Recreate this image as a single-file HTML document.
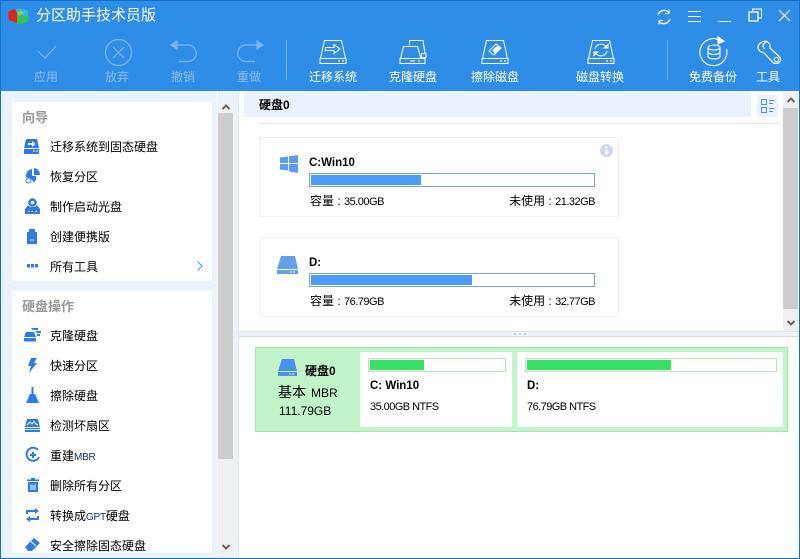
<!DOCTYPE html>
<html><head><meta charset="utf-8"><style>
html,body{margin:0;padding:0}
body{width:800px;height:559px;position:relative;overflow:hidden;background:#fff;font-family:"Liberation Sans","WenQuanYi Zen Hei","Noto Sans CJK SC",sans-serif;font-size:12px;color:#000}
.a,.t{position:absolute}
.t{white-space:nowrap;line-height:16px}
.w{color:#fff}.f{color:#8dbdee}
.c{transform:translateX(-50%)}
.g{color:#999;font-weight:bold;font-size:13px}
.l{font-size:11px;letter-spacing:-.5px}
.m{font-size:10px;letter-spacing:-.25px;color:#1a2f6e}
svg{position:absolute;overflow:visible}
.card{position:absolute;left:259px;width:358px;height:78px;border:1px solid #f0f0f4;background:#fff}
.bar{position:absolute;left:309px;width:284px;height:12px;border:1px solid #7ba4dc;background:#fff}
.bar i{display:block;position:absolute;left:1px;top:1px;height:10px;background:#4d9bfa}
.gb{position:absolute;height:12px;border:1px solid #b2e8bd;background:#fff}
.gb i{display:block;position:absolute;left:1px;top:1px;height:10px;background:#3ae066}
</style></head><body>
<div class="a" style="left:0;top:0;width:800px;height:559px;background:#eaf2fd"></div>
<div class="a" style="left:0;top:0;width:800px;height:91px;background:#2e8de6"></div>
<div class="a" style="left:0;top:0;width:800px;height:1px;background:#1173c4"></div>
<div class="a" style="left:0;top:0;width:1px;height:559px;background:#1173c4"></div>
<div class="a" style="left:0;top:558px;width:800px;height:1px;background:#1173c4"></div>

<svg style="left:8px;top:7px" width="21" height="18" viewBox="0 0 21 18">
<path d="M6 3 Q12 0 20 4 V10 L9 7 Z" fill="#2fb6e8"/>
<path d="M9 8 L20 9 V14 Q16 17 9 17 Z" fill="#34c24a"/>
<path d="M0 5 L7 2 L9 6 V16 L1 13 Z" fill="#e3211f"/>
<path d="M9 5 L14 4 L16 6 L11 9 Z" fill="#9ad13a"/>
</svg>
<div class="t w" style="left:36px;top:7px;font-size:15px;line-height:18px">分区助手技术员版</div>

<!-- window buttons -->
<svg style="left:655px;top:8px" width="18" height="18" fill="none" stroke="#fff" stroke-width="1.3">
<path d="M3 7A6.500 6.500 0 0 1 14 4.500M15 11A6.500 6.500 0 0 1 4 13.500"/><path d="M14 1.500v4h-4M4 16.500v-4h4" stroke-width="1"/></svg>
<svg style="left:687px;top:10px" width="14" height="13" stroke="#fff"><path d="M1 1.500H14M1 6.500H14M1 11.500H14"/></svg>
<svg style="left:717px;top:10px" width="14" height="13" stroke="#fff"><path d="M1 11.500H14"/></svg>
<svg style="left:748px;top:8px" width="14" height="14" fill="none" stroke="#fff"><path d="M4.500 4V1H13.500V10H10.500"/><rect x="1" y="4" width="9" height="9" stroke-width="1.300"/></svg>
<svg style="left:778px;top:9px" width="13" height="13" stroke="#fff" stroke-width="1.100"><path d="M1 1L12 12M12 1L1 12"/></svg>

<!-- toolbar icons -->
<svg style="left:36px;top:44px" width="22" height="16" fill="none" stroke="#7db5ec" stroke-width="1.200"><path d="M2 7L9 14L20 2"/></svg>
<svg style="left:104px;top:38px" width="28" height="28" fill="none" stroke="#7db5ec" stroke-width="1.200"><circle cx="14.500" cy="14.500" r="13"/><path d="M9 9L20 20M20 9L9 20"/></svg>
<svg style="left:170px;top:40px" width="28" height="24" fill="none" stroke="#7db5ec" stroke-width="1.200"><path d="M6 5H18A7.500 7.500 0 0 1 18 21.500H9"/><path d="M1 5L7 1V9Z" fill="#7db5ec"/></svg>
<svg style="left:236px;top:40px" width="28" height="24" fill="none" stroke="#7db5ec" stroke-width="1.200"><path d="M22 5H10A7.500 7.500 0 0 0 10 21.500H19"/><path d="M27 5L21 1V9Z" fill="#7db5ec"/></svg>
<div class="a" style="left:286px;top:40px;width:1px;height:40px;background:#6daeec"></div>
<div class="a" style="left:667px;top:40px;width:1px;height:40px;background:#6daeec"></div>

<svg style="left:319px;top:39px" width="30" height="26" fill="none" stroke="#fff"><path d="M5.500 1.500H22.500L26.500 19.500H1.500Z"/><rect x="1" y="19.500" width="26" height="5"/><path d="M6.500 8.500H15V5.500L21 10L15 14.500V11.500H6.500Z"/><path d="M19 22H21M23 22H25"/></svg>
<svg style="left:399px;top:39px" width="32" height="26" fill="none" stroke="#fff"><path d="M10.500 6.500V1.500H24L26 14.500"/><path d="M4.500 7.500H18.500L22 19.500H1.500Z" fill="#2e8de6"/><rect x="1" y="19.500" width="25" height="5"/><rect x="22.500" y="14.500" width="4.500" height="4"/><path d="M11 22H16M19 22H21"/></svg>
<svg style="left:481px;top:39px" width="30" height="26" fill="none" stroke="#fff"><path d="M5.500 1.500H22.500L26.500 19.500H1.500Z"/><rect x="1" y="19.500" width="26" height="5"/><path d="M8 12L15 5L20 9L13 16Z"/><path d="M12 11L17 7L19 9L14 14Z" fill="#fff"/><path d="M19 22H21M23 22H25"/></svg>
<svg style="left:587px;top:39px" width="30" height="26" fill="none" stroke="#fff"><path d="M5.500 1.500H22.500L26.500 19.500H1.500Z"/><rect x="1" y="19.500" width="26" height="5"/><path d="M8 10A6 6 0 0 1 19 8M20 12A6 6 0 0 1 9 14"/><path d="M17 9H21V5.500ZM11 13H7V16.500Z" fill="#fff"/><path d="M19 22H21M23 22H25"/></svg>
<svg style="left:699px;top:36px" width="30" height="30" fill="none" stroke="#fff" stroke-width="1.100"><path d="M22 5A13.500 13.500 0 1 0 27.500 13"/><path d="M19 1L25 5L19 8Z" fill="#fff"/><ellipse cx="15" cy="11.500" rx="6" ry="2.500"/><path d="M9 11.500V20.500C9 22 12 23 15 23S21 22 21 20.500V11.500M9 16C9 17.500 12 18.500 15 18.500S21 17.500 21 16"/></svg>
<svg style="left:757px;top:40px" width="26" height="26" fill="none" stroke="#fff" stroke-width="1.200"><path d="M10 1.500C6 0.500 1.500 3 1 7C1 10 3.500 12.500 6.500 12.500L15 21.500C17 24.500 23 24 23.500 20C23.800 18 23 16.800 21 15.500L13 8C13.500 5 12.500 3 10 1.500ZM9 1.800L5.500 5.500L7.500 9"/><circle cx="19.500" cy="19.500" r="2.200"/></svg>

<div class="t f c" style="left:46px;top:69px">应用</div>
<div class="t f c" style="left:117px;top:69px">放弃</div>
<div class="t f c" style="left:183px;top:69px">撤销</div>
<div class="t f c" style="left:249px;top:69px">重做</div>
<div class="t w c" style="left:333px;top:69px">迁移系统</div>
<div class="t w c" style="left:413px;top:69px">克隆硬盘</div>
<div class="t w c" style="left:495px;top:69px">擦除磁盘</div>
<div class="t w c" style="left:600px;top:69px">磁盘转换</div>
<div class="t w c" style="left:713px;top:69px">免费备份</div>
<div class="t w c" style="left:768px;top:69px">工具</div>

<!-- left panel -->
<div class="a" style="left:12px;top:102px;width:200px;height:179px;background:#fff"></div>
<div class="a" style="left:12px;top:291px;width:200px;height:262px;background:#fff"></div>
<div class="a" style="left:217px;top:91px;width:1px;height:467px;background:#fff"></div>
<div class="a" style="left:218px;top:102px;width:15px;height:451px;background:#f0f0f0"></div>
<div class="a" style="left:218px;top:113px;width:15px;height:346px;background:#cdcdcd"></div>
<svg style="left:221px;top:103px" width="10" height="8" fill="none" stroke="#666" stroke-width="2"><path d="M1.500 6L5 2.500L8.500 6"/></svg>
<svg style="left:221px;top:543px" width="10" height="8" fill="none" stroke="#666" stroke-width="2"><path d="M1.500 2L5 5.500L8.500 2"/></svg>

<div class="t g" style="left:22px;top:110px">向导</div>
<div class="t g" style="left:22px;top:299px">硬盘操作</div>

<div class="t" style="left:50px;top:139px">迁移系统到固态硬盘</div>
<div class="t" style="left:50px;top:169px">恢复分区</div>
<div class="t" style="left:50px;top:199px">制作启动光盘</div>
<div class="t" style="left:50px;top:229px">创建便携版</div>
<div class="t" style="left:50px;top:259px">所有工具</div>
<svg style="left:196px;top:260px" width="8" height="12" fill="none" stroke="#4a9cf0" stroke-width="1.100"><path d="M1.500 1.500L6 6L1.500 10.500"/></svg>
<div class="t" style="left:50px;top:328px">克隆硬盘</div>
<div class="t" style="left:50px;top:358px">快速分区</div>
<div class="t" style="left:50px;top:388px">擦除硬盘</div>
<div class="t" style="left:50px;top:418px">检测坏扇区</div>
<div class="t" style="left:50px;top:448px">重建<span class="m">MBR</span></div>
<div class="t" style="left:50px;top:478px">删除所有分区</div>
<div class="t" style="left:50px;top:508px">转换成<span class="m">GPT</span>硬盘</div>
<div class="t" style="left:50px;top:538px">安全擦除固态硬盘</div>

<svg style="left:24px;top:139px" width="16" height="15" fill="#2f7be6"><path d="M2 0H13L15 9H0Z"/><rect y="10" width="15" height="5"/><path d="M4 4H8V2L11.500 5L8 8V6H4Z" fill="#fff"/><path d="M9 12H11M12 12H14" stroke="#fff"/></svg>
<svg style="left:25px;top:168px" width="16" height="16" fill="#2f7be6"><path d="M9 0A7 7 0 0 1 15 7H9Z"/><path d="M7 1V8L11 8A7 7 0 0 1 9 14.500L6 11L1 9A7 7 0 0 1 7 1Z"/><circle cx="3.500" cy="12.500" r="2.500" fill="none" stroke="#2f7be6"/></svg>
<svg style="left:25px;top:198px" width="15" height="16" fill="#2f7be6"><circle cx="7.500" cy="4.500" r="3" fill="none" stroke="#2f7be6" stroke-width="2.500"/><path d="M3 7L0 11H15L12 7L10 9H5Z"/><rect y="11" width="15" height="5"/><path d="M3 13.500H4.500M6.500 13.500H8M10.500 13.500H12" stroke="#fff"/></svg>
<svg style="left:27px;top:229px" width="10" height="15" fill="#2f7be6"><path d="M2 0H8V3H2Z"/><rect y="3" width="10" height="12"/><path d="M3 11H7" stroke="#fff"/></svg>
<svg style="left:27px;top:264px" width="11" height="4" fill="#2f7be6"><rect width="3" height="3.500"/><rect x="4" width="3" height="3.500"/><rect x="8" width="3" height="3.500"/></svg>

<svg style="left:24px;top:328px" width="17" height="14" fill="#2f7be6"><path d="M7 0H14V2H9ZM11 3H17V5H13ZM2 4H10L12 9H0Z"/><rect y="10" width="12" height="3.500"/><rect x="13" y="6" width="3" height="2"/></svg>
<svg style="left:27px;top:358px" width="11" height="15" fill="#2f7be6"><path d="M4 0H10L7 5H10L2 15L4 8H1Z"/></svg>
<svg style="left:26px;top:387px" width="13" height="16" fill="#2f7be6"><rect x="5.500" y="0" width="2" height="7"/><path d="M4 7H9L13 16H0Z"/></svg>
<svg style="left:25px;top:419px" width="15" height="13" fill="#2f7be6"><path d="M2 0H13L15 8H0Z"/><path d="M2 6L5 3L7 5L9 2.500L11 5L13 6" stroke="#fff" fill="none"/><rect y="9" width="15" height="1.200"/><rect y="11" width="15" height="2"/></svg>
<svg style="left:25px;top:447px" width="15" height="16" fill="none" stroke="#2f7be6" stroke-width="2"><path d="M13 3A6.500 6.500 0 1 0 14 10"/><path d="M5 8H11M8 5V11"/></svg>
<svg style="left:27px;top:478px" width="12" height="14" fill="#2f7be6"><rect y="1.500" width="12" height="1.500"/><rect x="4" width="4" height="1.500"/><path d="M1 4H11V14H1Z"/><path d="M4 6.500V12M6 6.500V12M8 6.500V12" stroke="#fff"/></svg>
<svg style="left:26px;top:508px" width="13" height="14" fill="none" stroke="#2f7be6" stroke-width="2"><path d="M1 6V3H10M1 11H12V8"/><path d="M9 0L13 3L9 6ZM4 8L0 11L4 14Z" fill="#2f7be6" stroke="none"/></svg>
<svg style="left:25px;top:538px" width="15" height="13" fill="#2f7be6"><path d="M9 0L15 5L7 13H3L0 9Z"/><path d="M6 3.500L11 8" stroke="#fff"/></svg>

<!-- right panel -->
<div class="a" style="left:238px;top:91px;width:561px;height:467px;background:#fff"></div>
<div class="a" style="left:238px;top:91px;width:1px;height:467px;background:#e3e8f1"></div>
<div class="a" style="left:799px;top:0;width:1px;height:559px;background:#1173c4"></div>
<div class="a" style="left:244px;top:91px;width:507px;height:26px;background:#eaf3fd"></div>
<div class="t" style="left:259px;top:97px;font-weight:bold">硬盘0</div>
<div class="a" style="left:757px;top:95px;width:21px;height:22px;background:#eaf3fd"></div>
<svg style="left:761px;top:99px" width="14" height="15" fill="none" stroke="#4d8ff0"><rect x=".5" y=".5" width="5" height="5"/><rect x=".5" y="8.500" width="5" height="5"/><path d="M8 1.500H13.500M8 4.500H12M8 9.500H13.500M8 12.500H12"/></svg>
<div class="a" style="left:259px;top:123px;width:521px;height:1px;background:#e3e6ec"></div>

<div class="a" style="left:783px;top:91px;width:15px;height:241px;background:#f0f0f0"></div>
<div class="a" style="left:783px;top:108px;width:15px;height:201px;background:#cdcdcd"></div>
<svg style="left:786px;top:96px" width="10" height="8" fill="none" stroke="#666" stroke-width="2"><path d="M1.500 6L5 2.500L8.500 6"/></svg>
<svg style="left:786px;top:319px" width="10" height="8" fill="none" stroke="#666" stroke-width="2"><path d="M1.500 2L5 5.500L8.500 2"/></svg>

<div class="card" style="top:137px"></div>
<div class="card" style="top:237px"></div>
<svg style="left:600px;top:144px" width="13" height="13"><circle cx="6.500" cy="6.500" r="6.500" fill="#cfd9e8"/><rect x="5.500" y="2.500" width="2" height="1.800" fill="#fff"/><rect x="5.500" y="5.500" width="2" height="5" fill="#fff"/></svg>
<svg style="left:280px;top:155px" width="19" height="18" fill="#5a9cf0"><path d="M0 2.500L8 1.500V8H0ZM9 1.300L18 0V8H9ZM0 9H8V15.500L0 14.500ZM9 9H18V18L9 16.500Z"/></svg>
<svg style="left:277px;top:256px" width="22" height="18" fill="#659fe8"><path d="M4 0H18L21 13H0Z"/><rect y="14" width="21" height="4"/><path d="M13 16H15M16 16H18" stroke="#fff"/></svg>
<div class="t" style="left:309px;top:155px;font-weight:bold;font-size:11.500px">C:Win10</div>
<div class="t" style="left:309px;top:255px;font-weight:bold;font-size:11.500px">D:</div>
<div class="bar" style="top:173px"><i style="width:110px"></i></div>
<div class="bar" style="top:273px"><i style="width:161px"></i></div>
<div class="t" style="left:310px;top:193px">容量 : <span class="l">35.00GB</span></div>
<div class="t" style="right:205px;top:193px">未使用 : <span class="l">21.32GB</span></div>
<div class="t" style="left:310px;top:293px">容量 : <span class="l">76.79GB</span></div>
<div class="t" style="right:205px;top:293px">未使用 : <span class="l">32.77GB</span></div>

<!-- splitter -->
<div class="a" style="left:239px;top:331px;width:560px;height:6px;background:#eef2f9;border-top:1px solid #dfe3ec;border-bottom:1px solid #d5dbe8;box-sizing:border-box"></div>
<svg style="left:514px;top:333px" width="14" height="2" fill="#c3cfe0"><rect width="2" height="2"/><rect x="5" width="2" height="2"/><rect x="10" width="2" height="2"/></svg>

<!-- disk map -->
<div class="a" style="left:255px;top:347px;width:531px;height:83px;background:#c1f4c8;border:1px solid #a8e4b0"></div>
<div class="a" style="left:360px;top:352px;width:152px;height:75px;background:#fff"></div>
<div class="a" style="left:517px;top:352px;width:266px;height:75px;background:#fff"></div>
<svg style="left:278px;top:359px" width="21" height="17" fill="#4a92ee"><path d="M4 0H16L19 12H0Z"/><rect y="13" width="19" height="4"/><path d="M11 15H13M14 15H16" stroke="#fff"/></svg>
<div class="t" style="left:305px;top:363px;font-weight:bold">硬盘0</div>
<div class="t" style="left:278px;top:384px;font-size:14px">基本<span style="font-size:12px;margin-left:5px">MBR</span></div>
<div class="t" style="left:279px;top:403px">111.79GB</div>
<div class="gb" style="left:368px;top:358px;width:136px"><i style="width:54px"></i></div>
<div class="gb" style="left:525px;top:358px;width:250px"><i style="width:144px"></i></div>
<div class="t" style="left:370px;top:378px;font-weight:bold;font-size:11.500px">C: Win10</div>
<div class="t" style="left:527px;top:378px;font-weight:bold;font-size:11.500px">D:</div>
<div class="t" style="left:370px;top:399px;font-size:11px;letter-spacing:-.55px">35.00GB NTFS</div>
<div class="t" style="left:527px;top:399px;font-size:11px;letter-spacing:-.55px">76.79GB NTFS</div>
</body></html>
